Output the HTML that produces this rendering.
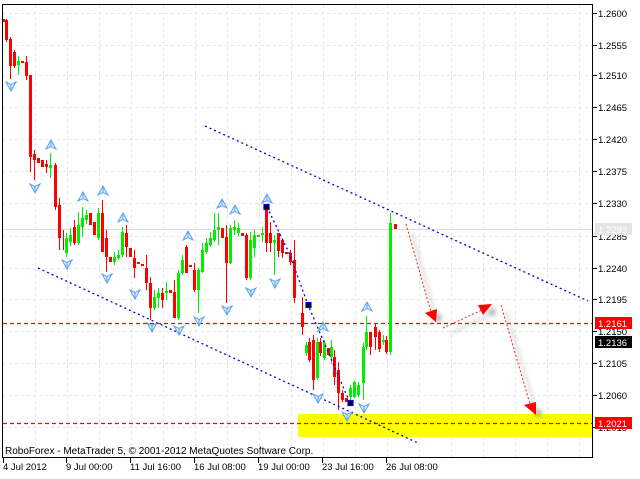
<!DOCTYPE html>
<html><head><meta charset="utf-8"><style>
html,body{margin:0;padding:0;background:#fff;width:640px;height:479px;overflow:hidden}
svg{display:block;font-family:"Liberation Sans",sans-serif}
</style></head><body>
<svg width="640" height="479" viewBox="0 0 640 479" xmlns="http://www.w3.org/2000/svg">
<defs>
<filter id="bl" x="-50%" y="-50%" width="200%" height="200%"><feGaussianBlur stdDeviation="2"/></filter>
<g id="up"><polygon points="0,-5 5,4 0,1.5 -5,4" fill="#dcecff" stroke="#5aa2f0" stroke-width="1"/><line x1="0" y1="-4" x2="0" y2="1.5" stroke="#5aa2f0"/></g>
<g id="dn"><polygon points="0,5 5,-4 0,-1.5 -5,-4" fill="#dcecff" stroke="#5aa2f0" stroke-width="1"/><line x1="0" y1="4" x2="0" y2="-1.5" stroke="#5aa2f0"/></g>
</defs>
<!-- grid -->
<g stroke="#e4e4e4" stroke-dasharray="3,3" stroke-width="1">
<line x1="3" y1="13.5" x2="592" y2="13.5"/><line x1="3" y1="45.5" x2="592" y2="45.5"/><line x1="3" y1="75.5" x2="592" y2="75.5"/><line x1="3" y1="107.5" x2="592" y2="107.5"/><line x1="3" y1="139.5" x2="592" y2="139.5"/><line x1="3" y1="171.5" x2="592" y2="171.5"/><line x1="3" y1="203.5" x2="592" y2="203.5"/><line x1="3" y1="236.5" x2="592" y2="236.5"/><line x1="3" y1="268.5" x2="592" y2="268.5"/><line x1="3" y1="299.5" x2="592" y2="299.5"/><line x1="3" y1="331.5" x2="592" y2="331.5"/><line x1="3" y1="363.5" x2="592" y2="363.5"/><line x1="3" y1="395.5" x2="592" y2="395.5"/><line x1="3" y1="427.5" x2="592" y2="427.5"/>
<line x1="35.5" y1="5" x2="35.5" y2="457"/><line x1="67.5" y1="5" x2="67.5" y2="457"/><line x1="99.5" y1="5" x2="99.5" y2="457"/><line x1="131.5" y1="5" x2="131.5" y2="457"/><line x1="163.5" y1="5" x2="163.5" y2="457"/><line x1="195.5" y1="5" x2="195.5" y2="457"/><line x1="227.5" y1="5" x2="227.5" y2="457"/><line x1="259.5" y1="5" x2="259.5" y2="457"/><line x1="291.5" y1="5" x2="291.5" y2="457"/><line x1="323.5" y1="5" x2="323.5" y2="457"/><line x1="355.5" y1="5" x2="355.5" y2="457"/><line x1="387.5" y1="5" x2="387.5" y2="457"/><line x1="419.5" y1="5" x2="419.5" y2="457"/><line x1="451.5" y1="5" x2="451.5" y2="457"/><line x1="483.5" y1="5" x2="483.5" y2="457"/><line x1="515.5" y1="5" x2="515.5" y2="457"/><line x1="547.5" y1="5" x2="547.5" y2="457"/><line x1="579.5" y1="5" x2="579.5" y2="457"/>
</g>
<line x1="3" y1="229.5" x2="592" y2="229.5" stroke="#dcdcdc"/>
<!-- yellow zone -->
<rect x="298" y="414" width="294" height="23" fill="#ffff00"/>
<!-- red dashed levels -->
<line x1="3" y1="323.5" x2="592" y2="323.5" style="stroke:#ff0000;stroke-width:1.2;stroke-dasharray:4 3"/>
<line x1="3" y1="423.5" x2="592" y2="423.5" style="stroke:#ff0000;stroke-width:1.2;stroke-dasharray:4 3"/>
<!-- candles: wicks -->
<g stroke-width="1">
<g stroke="#ff0000">
<line x1="6.5" y1="19" x2="6.5" y2="42"/><line x1="10.5" y1="37" x2="10.5" y2="79"/><line x1="14.5" y1="50" x2="14.5" y2="68"/><line x1="26.5" y1="56" x2="26.5" y2="80"/><line x1="30.5" y1="75" x2="30.5" y2="172"/><line x1="34.5" y1="150" x2="34.5" y2="180"/><line x1="46.5" y1="160" x2="46.5" y2="173"/><line x1="55.5" y1="163" x2="55.5" y2="210"/><line x1="59.5" y1="198" x2="59.5" y2="250"/><line x1="63.5" y1="230" x2="63.5" y2="250"/><line x1="74.5" y1="220" x2="74.5" y2="245"/><line x1="102.5" y1="200" x2="102.5" y2="252"/><line x1="106.5" y1="230" x2="106.5" y2="272"/><line x1="126.5" y1="225" x2="126.5" y2="257"/><line x1="134.5" y1="250" x2="134.5" y2="278"/><line x1="146.5" y1="255" x2="146.5" y2="290"/><line x1="150.5" y1="277" x2="150.5" y2="320"/><line x1="162.5" y1="288" x2="162.5" y2="308"/><line x1="174.5" y1="280" x2="174.5" y2="318"/><line x1="186.5" y1="245" x2="186.5" y2="273"/><line x1="194.5" y1="263" x2="194.5" y2="292"/><line x1="226.5" y1="225" x2="226.5" y2="303"/><line x1="246.5" y1="233" x2="246.5" y2="280"/><line x1="266.5" y1="207" x2="266.5" y2="252"/><line x1="270.5" y1="222" x2="270.5" y2="252"/><line x1="278.5" y1="233" x2="278.5" y2="257"/><line x1="282.5" y1="240" x2="282.5" y2="258"/><line x1="290.5" y1="250" x2="290.5" y2="265"/><line x1="294.5" y1="240" x2="294.5" y2="303"/><line x1="302.5" y1="297" x2="302.5" y2="335"/><line x1="309.5" y1="338" x2="309.5" y2="362"/><line x1="313.5" y1="335" x2="313.5" y2="390"/><line x1="320.5" y1="338" x2="320.5" y2="356"/><line x1="334.5" y1="350" x2="334.5" y2="385"/><line x1="338.5" y1="362" x2="338.5" y2="410"/><line x1="342.5" y1="390" x2="342.5" y2="402"/><line x1="370.5" y1="335" x2="370.5" y2="355"/><line x1="375.5" y1="323" x2="375.5" y2="350"/><line x1="379.5" y1="330" x2="379.5" y2="352"/><line x1="386.5" y1="336" x2="386.5" y2="354"/>
</g>
<g stroke="#00ee00">
<line x1="18.5" y1="56" x2="18.5" y2="75"/><line x1="50.5" y1="153" x2="50.5" y2="178"/><line x1="66.5" y1="233" x2="66.5" y2="257"/><line x1="70.5" y1="228" x2="70.5" y2="246"/><line x1="78.5" y1="212" x2="78.5" y2="245"/><line x1="82.5" y1="207" x2="82.5" y2="237"/><line x1="86.5" y1="210" x2="86.5" y2="224"/><line x1="98.5" y1="208" x2="98.5" y2="240"/><line x1="114.5" y1="252" x2="114.5" y2="265"/><line x1="118.5" y1="250" x2="118.5" y2="260"/><line x1="122.5" y1="227" x2="122.5" y2="257"/><line x1="154.5" y1="290" x2="154.5" y2="310"/><line x1="158.5" y1="288" x2="158.5" y2="308"/><line x1="166.5" y1="282" x2="166.5" y2="300"/><line x1="178.5" y1="270" x2="178.5" y2="320"/><line x1="182.5" y1="255" x2="182.5" y2="275"/><line x1="198.5" y1="268" x2="198.5" y2="313"/><line x1="202.5" y1="243" x2="202.5" y2="273"/><line x1="206.5" y1="238" x2="206.5" y2="254"/><line x1="210.5" y1="232" x2="210.5" y2="247"/><line x1="214.5" y1="213" x2="214.5" y2="242"/><line x1="218.5" y1="213" x2="218.5" y2="245"/><line x1="230.5" y1="225" x2="230.5" y2="264"/><line x1="234.5" y1="220" x2="234.5" y2="235"/><line x1="238.5" y1="223" x2="238.5" y2="236"/><line x1="250.5" y1="232" x2="250.5" y2="280"/><line x1="254.5" y1="230" x2="254.5" y2="257"/><line x1="262.5" y1="227" x2="262.5" y2="242"/><line x1="274.5" y1="235" x2="274.5" y2="275"/><line x1="306.5" y1="342" x2="306.5" y2="356"/><line x1="317.5" y1="338" x2="317.5" y2="380"/><line x1="324.5" y1="340" x2="324.5" y2="360"/><line x1="331.5" y1="340" x2="331.5" y2="364"/><line x1="350.5" y1="385" x2="350.5" y2="400"/><line x1="354.5" y1="380" x2="354.5" y2="398"/><line x1="358.5" y1="382" x2="358.5" y2="397"/><line x1="363.5" y1="343" x2="363.5" y2="400"/><line x1="366.5" y1="316" x2="366.5" y2="350"/><line x1="383.5" y1="335" x2="383.5" y2="345"/><line x1="390.5" y1="213" x2="390.5" y2="355"/>
</g>
</g>
<!-- bodies -->
<g fill="#ff0000">
<rect x="2" y="19" width="3" height="3"/><rect x="5" y="20" width="3" height="20"/><rect x="9" y="39" width="3" height="27"/><rect x="13" y="52" width="3" height="14"/><rect x="21" y="61" width="3" height="2"/><rect x="25" y="62" width="3" height="14"/><rect x="29" y="75" width="3" height="82"/><rect x="33" y="154" width="3" height="6"/><rect x="37" y="158" width="3" height="5"/><rect x="41" y="160" width="3" height="7"/><rect x="45" y="164" width="3" height="3"/><rect x="54" y="165" width="3" height="42"/><rect x="58" y="205" width="3" height="33"/><rect x="73" y="227" width="3" height="16"/><rect x="89" y="213" width="3" height="12"/><rect x="93" y="222" width="3" height="13"/><rect x="101" y="213" width="3" height="39"/><rect x="105" y="238" width="3" height="19"/><rect x="109" y="257" width="3" height="5"/><rect x="125" y="233" width="3" height="14"/><rect x="129" y="248" width="3" height="9"/><rect x="133" y="258" width="3" height="10"/><rect x="137" y="262" width="3" height="2"/><rect x="141" y="264" width="3" height="2"/><rect x="145" y="268" width="3" height="15"/><rect x="149" y="283" width="3" height="25"/><rect x="161" y="293" width="3" height="7"/><rect x="169" y="290" width="3" height="3"/><rect x="173" y="292" width="3" height="26"/><rect x="185" y="247" width="3" height="26"/><rect x="189" y="265" width="3" height="2"/><rect x="193" y="270" width="3" height="20"/><rect x="221" y="228" width="3" height="10"/><rect x="225" y="237" width="3" height="26"/><rect x="241" y="233" width="3" height="3"/><rect x="245" y="235" width="3" height="43"/><rect x="265" y="207" width="3" height="36"/><rect x="269" y="233" width="3" height="10"/><rect x="277" y="233" width="3" height="18"/><rect x="281" y="240" width="3" height="13"/><rect x="285" y="252" width="3" height="2"/><rect x="289" y="253" width="3" height="9"/><rect x="293" y="260" width="3" height="38"/><rect x="301" y="313" width="3" height="14"/><rect x="308" y="342" width="3" height="18"/><rect x="312" y="340" width="3" height="40"/><rect x="319" y="342" width="3" height="11"/><rect x="327" y="348" width="3" height="7"/><rect x="333" y="357" width="3" height="20"/><rect x="337" y="370" width="3" height="23"/><rect x="341" y="393" width="3" height="7"/><rect x="345" y="398" width="3" height="4"/><rect x="369" y="332" width="3" height="15"/><rect x="374" y="327" width="3" height="10"/><rect x="378" y="332" width="3" height="17"/><rect x="385" y="340" width="3" height="12"/><rect x="394" y="224" width="3" height="5"/>
</g>
<g fill="#00ee00">
<rect x="17" y="61" width="3" height="4"/><rect x="49" y="165" width="3" height="3"/><rect x="65" y="238" width="3" height="15"/><rect x="69" y="235" width="3" height="7"/><rect x="77" y="225" width="3" height="18"/><rect x="81" y="218" width="3" height="9"/><rect x="85" y="215" width="3" height="5"/><rect x="97" y="213" width="3" height="25"/><rect x="113" y="257" width="3" height="5"/><rect x="117" y="255" width="3" height="3"/><rect x="121" y="232" width="3" height="23"/><rect x="153" y="297" width="3" height="11"/><rect x="157" y="293" width="3" height="5"/><rect x="165" y="291" width="3" height="2"/><rect x="177" y="273" width="3" height="45"/><rect x="181" y="260" width="3" height="13"/><rect x="197" y="270" width="3" height="20"/><rect x="201" y="250" width="3" height="22"/><rect x="205" y="243" width="3" height="9"/><rect x="209" y="238" width="3" height="7"/><rect x="213" y="230" width="3" height="10"/><rect x="217" y="227" width="3" height="3"/><rect x="229" y="228" width="3" height="35"/><rect x="233" y="227" width="3" height="3"/><rect x="237" y="228" width="3" height="5"/><rect x="249" y="240" width="3" height="38"/><rect x="253" y="235" width="3" height="13"/><rect x="257" y="235" width="3" height="2"/><rect x="261" y="233" width="3" height="2"/><rect x="273" y="240" width="3" height="3"/><rect x="305" y="345" width="3" height="8"/><rect x="316" y="342" width="3" height="36"/><rect x="323" y="343" width="3" height="15"/><rect x="330" y="347" width="3" height="10"/><rect x="349" y="388" width="3" height="9"/><rect x="353" y="382" width="3" height="15"/><rect x="357" y="385" width="3" height="10"/><rect x="362" y="347" width="3" height="36"/><rect x="365" y="332" width="3" height="15"/><rect x="382" y="340" width="3" height="2"/><rect x="389" y="223" width="3" height="129"/>
</g>
<!-- blue trend lines -->
<g stroke="#0000dd" stroke-width="1.3" stroke-dasharray="2,3" fill="none">
<line x1="205" y1="126" x2="588" y2="301"/>
<line x1="38" y1="268" x2="418" y2="443"/>
<polyline points="267,207 290,255 308,305 350,403"/>
</g>
<g fill="#000" stroke="#0000ee" stroke-width="1.2">
<rect x="264" y="204.5" width="5" height="5"/><rect x="306" y="302.5" width="5" height="5"/><rect x="348" y="400.5" width="5" height="5"/>
</g>
<!-- fractal arrows -->
<use href="#up" x="51" y="145"/><use href="#up" x="83" y="197"/><use href="#up" x="103" y="191"/><use href="#up" x="123" y="218"/><use href="#up" x="188" y="236"/><use href="#up" x="222" y="204"/><use href="#up" x="235" y="210"/><use href="#up" x="267" y="199"/><use href="#up" x="323" y="327"/><use href="#up" x="367" y="307"/>
<use href="#dn" x="11" y="86"/><use href="#dn" x="35" y="188"/><use href="#dn" x="67" y="264"/><use href="#dn" x="107" y="278"/><use href="#dn" x="135" y="294"/><use href="#dn" x="152" y="327"/><use href="#dn" x="179" y="330"/><use href="#dn" x="199" y="321"/><use href="#dn" x="227" y="310"/><use href="#dn" x="251" y="292"/><use href="#dn" x="275" y="283"/><use href="#dn" x="318" y="398"/><use href="#dn" x="347" y="416"/><use href="#dn" x="364" y="408"/>
<!-- red forecast arrows with shadows -->
<g fill="#888" opacity="0.6" filter="url(#bl)">
<circle cx="438" cy="318" r="4"/><circle cx="492" cy="312" r="4"/><circle cx="538" cy="413" r="4"/>
<line x1="412" y1="232" x2="436" y2="318" stroke="#aaa" stroke-width="2"/><line x1="450" y1="334" x2="488" y2="315" stroke="#aaa" stroke-width="2"/><line x1="506" y1="312" x2="536" y2="410" stroke="#aaa" stroke-width="2"/>
</g>
<line x1="406" y1="224" x2="431" y2="312" style="stroke:#ff2020;stroke-width:1;stroke-dasharray:2 2"/>
<line x1="443" y1="328" x2="482" y2="310" style="stroke:#ff2020;stroke-width:1;stroke-dasharray:2 2"/>
<line x1="501" y1="305" x2="530" y2="404" style="stroke:#ff2020;stroke-width:1;stroke-dasharray:2 2"/>
<g fill="#ff0000">
<polygon points="425,313 437,309 436,322"/>
<polygon points="478,305 492,304 483,315"/>
<polygon points="524,405 536,402 536,415"/>
</g>
<!-- frame -->
<line x1="2.5" y1="4" x2="2.5" y2="457" stroke="#000"/>
<line x1="2" y1="4.5" x2="593" y2="4.5" stroke="#000"/>
<line x1="592.5" y1="4" x2="592.5" y2="458" stroke="#000"/>
<line x1="2" y1="457.5" x2="593" y2="457.5" stroke="#000"/>
<!-- y ticks & labels -->
<g stroke="#000"><line x1="593" y1="13.5" x2="597" y2="13.5"/><line x1="593" y1="45.5" x2="597" y2="45.5"/><line x1="593" y1="75.5" x2="597" y2="75.5"/><line x1="593" y1="107.5" x2="597" y2="107.5"/><line x1="593" y1="139.5" x2="597" y2="139.5"/><line x1="593" y1="171.5" x2="597" y2="171.5"/><line x1="593" y1="203.5" x2="597" y2="203.5"/><line x1="593" y1="236.5" x2="597" y2="236.5"/><line x1="593" y1="268.5" x2="597" y2="268.5"/><line x1="593" y1="299.5" x2="597" y2="299.5"/><line x1="593" y1="331.5" x2="597" y2="331.5"/><line x1="593" y1="363.5" x2="597" y2="363.5"/><line x1="593" y1="395.5" x2="597" y2="395.5"/><line x1="593" y1="427.5" x2="597" y2="427.5"/></g>
<g font-size="9.5" fill="#000">
<text x="598" y="17">1.2600</text><text x="598" y="49">1.2555</text><text x="598" y="79">1.2510</text><text x="598" y="111">1.2465</text><text x="598" y="143">1.2420</text><text x="598" y="175">1.2375</text><text x="598" y="207">1.2330</text><text x="598" y="240">1.2285</text><text x="598" y="272">1.2240</text><text x="598" y="303">1.2195</text><text x="598" y="335">1.2150</text><text x="598" y="367">1.2105</text><text x="598" y="399">1.2060</text><text x="598" y="431">1.2015</text>
</g>
<rect x="595" y="223" width="37" height="12" fill="#e4e4e4"/><text x="598" y="233" font-size="9.5" fill="#fff">1.2293</text>
<rect x="595" y="317" width="37" height="12" fill="#ff0000"/><text x="598" y="327" font-size="9.5" fill="#fff">1.2161</text>
<rect x="595" y="336" width="37" height="12" fill="#000"/><text x="598" y="346" font-size="9.5" fill="#fff">1.2136</text>
<rect x="595" y="417" width="37" height="12" fill="#ff0000"/><text x="598" y="427" font-size="9.5" fill="#fff">1.2021</text>
<!-- copyright -->
<text x="5" y="454" font-size="10" fill="#000">RoboForex - MetaTrader 5, © 2001-2012 MetaQuotes Software Corp.</text>
<!-- x ticks & labels -->
<g stroke="#000"><line x1="3.5" y1="458" x2="3.5" y2="463"/><line x1="66.5" y1="458" x2="66.5" y2="463"/><line x1="130.5" y1="458" x2="130.5" y2="463"/><line x1="194.5" y1="458" x2="194.5" y2="463"/><line x1="258.5" y1="458" x2="258.5" y2="463"/><line x1="322.5" y1="458" x2="322.5" y2="463"/><line x1="386.5" y1="458" x2="386.5" y2="463"/></g>
<g font-size="9.5" fill="#000">
<text x="3" y="470">4 Jul 2012</text><text x="66" y="470">9 Jul 00:00</text><text x="130" y="470">11 Jul 16:00</text><text x="194" y="470">16 Jul 08:00</text><text x="258" y="470">19 Jul 00:00</text><text x="322" y="470">23 Jul 16:00</text><text x="386" y="470">26 Jul 08:00</text>
</g>
</svg>
</body></html>
